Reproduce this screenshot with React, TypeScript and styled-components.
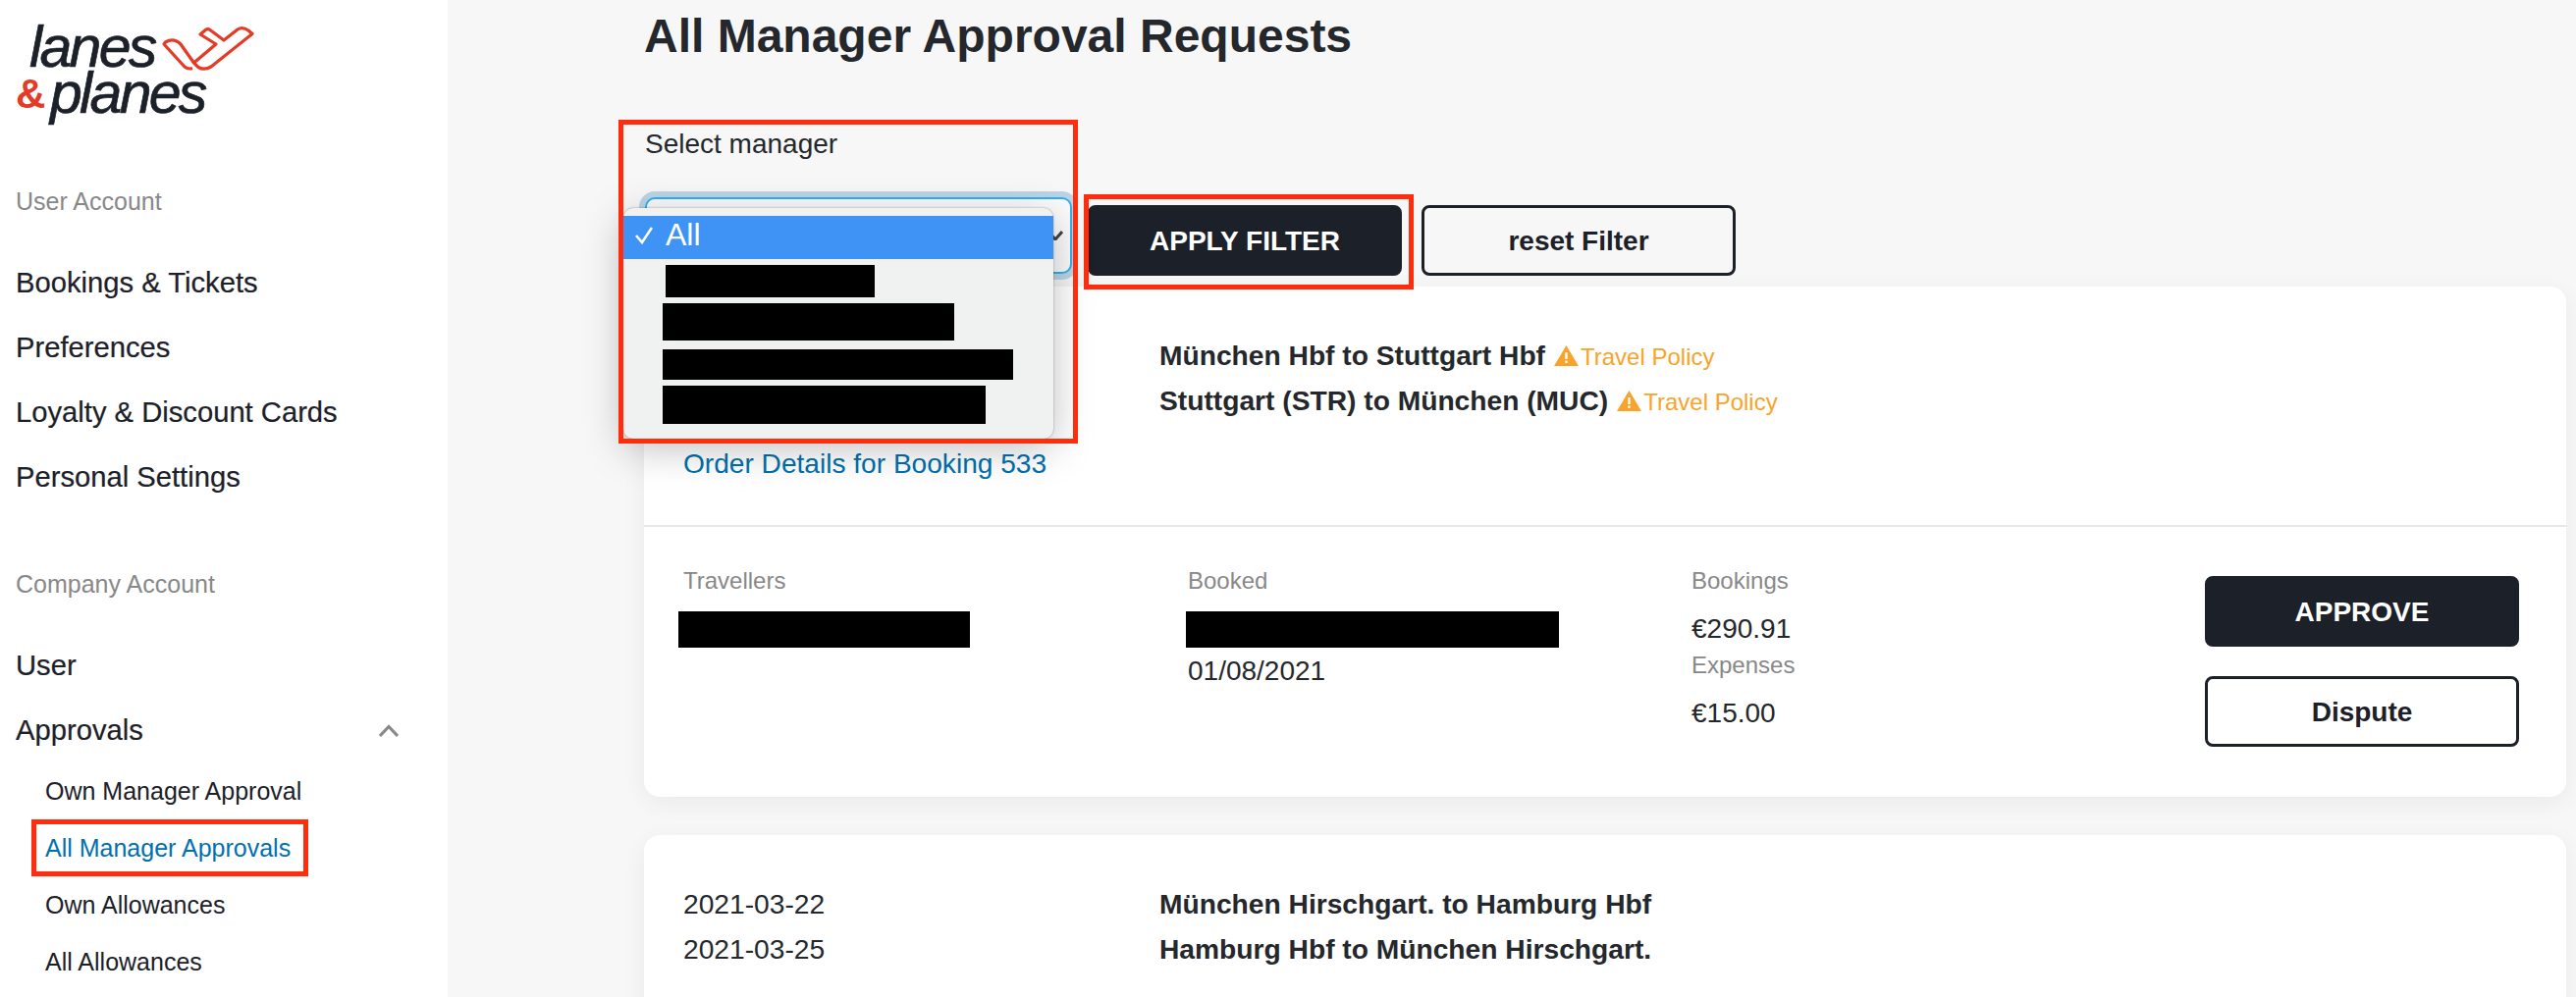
import React from "react";
import styled, { createGlobalStyle } from "styled-components";

const ink = "#1c2028";
const grey = "#888888";
const linkBlue = "#0070ae";
const markRed = "#ff2d0e";
const logoRed = "#e33b26";
const orange = "#f9a32a";

const GlobalStyle = createGlobalStyle`
  html, body {
    margin: 0;
    padding: 0;
    background: #f7f7f7;
    font-family: "Liberation Sans", Arial, sans-serif;
    color: ${ink};
  }
`;

const Page = styled.div`
  display: flex;
  width: 2624px;
  height: 1016px;
  overflow: hidden;
`;

const Sidebar = styled.aside`
  flex: 0 0 456px;
  box-sizing: border-box;
  padding-left: 16px;
  background: #fff;
`;

const Logo = styled.div`
  height: 96px;
  padding-top: 25px;
  font-size: 59px;
  line-height: 46px;
  font-style: italic;
  letter-spacing: -2.7px;
  color: ${ink};
  -webkit-text-stroke: 0.7px ${ink};
`;

const LogoLine = styled.div<{ $indent: number; $lift?: number }>`
  display: flex;
  align-items: flex-start;
  padding-left: ${(p) => p.$indent}px;
  margin-top: ${(p) => -(p.$lift || 0)}px;
`;

const PlaneMark = styled.svg`
  width: 105px;
  height: 55px;
  margin: -4px 0 0 2px;
  flex: none;
`;

const Ampersand = styled.span`
  width: 34px;
  font-size: 42px;
  font-style: normal;
  font-weight: 700;
  letter-spacing: 0;
  color: ${logoRed};
  -webkit-text-stroke: 0;
  transform: translate(-1px, 1px);
`;

const SectionLabel = styled.div<{ $gap: number }>`
  margin-top: ${(p) => p.$gap}px;
  margin-bottom: 33px;
  font-size: 25px;
  line-height: 34px;
  color: ${grey};
`;

const NavItem = styled.div`
  display: flex;
  align-items: center;
  justify-content: space-between;
  height: 66px;
  padding-right: 50px;
  font-size: 29.2px;
  -webkit-text-stroke: 0.2px ${ink};
`;

const SubItem = styled.div<{ $active?: boolean }>`
  position: relative;
  height: 58px;
  padding-left: 30px;
  font-size: 25px;
  line-height: 58px;
  color: ${(p) => (p.$active ? linkBlue : ink)};
`;

const Highlight = styled.div`
  position: absolute;
  box-sizing: border-box;
  border: 5px solid ${markRed};
  pointer-events: none;
  z-index: 6;
`;

const NavHighlight = styled(Highlight)`
  left: 16px;
  top: 0;
  width: 282px;
  height: 58px;
`;

const Main = styled.main`
  flex: 1;
  min-width: 0;
  padding: 0 10px 0 200px;
`;

const Title = styled.h1`
  margin: 0;
  font-size: 48px;
  line-height: 74px;
  font-weight: 700;
  color: #24272b;
`;

const FilterRow = styled.div`
  display: flex;
  align-items: flex-end;
  gap: 16px;
  margin-top: 55px;
  padding-bottom: 11px;
`;

const SelectGroup = styled.div`
  position: relative;
  padding-left: 1px;
`;

const SelectLabel = styled.div`
  margin-bottom: 36px;
  font-size: 28px;
  line-height: 36px;
  color: #24272b;
`;

const SelectBox = styled.div`
  position: relative;
  display: flex;
  align-items: center;
  justify-content: flex-end;
  box-sizing: border-box;
  width: 435px;
  height: 78px;
  margin-bottom: 2px;
  padding-right: 7px;
  background: #fbfbfb;
  border: 2px solid #2eb0f5;
  border-radius: 10px;
  box-shadow: 0 0 0 6px #bdd4e4;
`;

const Dropdown = styled.div`
  position: absolute;
  left: -21px;
  top: 83px;
  width: 438px;
  height: 235px;
  padding-top: 8px;
  box-sizing: border-box;
  background: #f0f1f1;
  border-radius: 10px;
  box-shadow: 0 0 2px rgba(0, 0, 0, 0.4), 0 10px 40px rgba(0, 0, 0, 0.25);
  z-index: 5;
`;

const OptionSelected = styled.div`
  display: flex;
  align-items: center;
  gap: 13px;
  box-sizing: border-box;
  height: 44px;
  padding: 0 0 5px 12px;
  background: #3f93f5;
  color: #fff;
  font-size: 32px;
`;

const Redacted = styled.div<{ $w: number; $h: number; $left: number; $top: number }>`
  width: ${(p) => p.$w}px;
  height: ${(p) => p.$h}px;
  margin-left: ${(p) => p.$left}px;
  margin-top: ${(p) => p.$top}px;
  background: #000;
`;

const SelectHighlight = styled(Highlight)`
  left: -26px;
  top: -7px;
  width: 468px;
  height: 330px;
`;

const Button = styled.button<{ $dark?: boolean; $width: number }>`
  box-sizing: border-box;
  display: block;
  width: ${(p) => p.$width}px;
  height: 72px;
  padding: 2px 0 0;
  border: 3px solid ${ink};
  border-radius: 8px;
  background: ${(p) => (p.$dark ? ink : "transparent")};
  color: ${(p) => (p.$dark ? "#fff" : ink)};
  font: 700 28px "Liberation Sans", Arial, sans-serif;
`;

const ApplyWrap = styled.div`
  position: relative;
  margin-right: 4px;
`;

const ApplyHighlight = styled(Highlight)`
  left: -4px;
  top: -11px;
  width: 336px;
  height: 97px;
`;

const Card = styled.section<{ $tall?: boolean }>`
  box-sizing: border-box;
  min-height: ${(p) => (p.$tall ? "300px" : "0")};
  margin-bottom: 39px;
  background: #fff;
  border-radius: 16px;
  box-shadow: 0 6px 24px rgba(0, 0, 0, 0.06);
`;

const CardTop = styled.div<{ $divided?: boolean }>`
  padding: 47px 40px 39px;
  border-bottom: ${(p) => (p.$divided ? "2px solid #e8e8e8" : "none")};
`;

const TripGrid = styled.div`
  display: grid;
  grid-template-columns: 485px 1fr;
  grid-auto-rows: 46px;
  align-items: center;
  font-size: 28.2px;
`;

const TripDate = styled.div`
  grid-column: 1;
  color: #24272b;
`;

const TripRoute = styled.div`
  grid-column: 2;
  display: flex;
  align-items: center;
`;

const RouteName = styled.span`
  font-weight: 700;
  color: #24272b;
`;

const PolicyNote = styled.span`
  display: inline-flex;
  align-items: center;
  margin-left: 9px;
  font-size: 24px;
  color: ${orange};
`;

const PolicyText = styled.span`
  margin: 3px 0 0 2px;
`;

const OrderLink = styled.a`
  display: block;
  margin-top: 19px;
  font-size: 28.1px;
  line-height: 46px;
  color: ${linkBlue};
`;

const CardBottom = styled.div`
  display: grid;
  grid-template-columns: 514px 513px 523px 320px;
  padding: 38px 48px 51px 40px;
`;

const Label = styled.div`
  font-size: 24px;
  line-height: 34px;
  color: ${grey};
`;

const Value = styled.div`
  margin-top: 14px;
  font-size: 28px;
  line-height: 36px;
  color: #24272b;
`;

const DateBelow = styled(Value)`
  margin-top: 6px;
`;

const Expenses = styled(Label)`
  margin-top: 2px;
`;

const Actions = styled.div`
  display: flex;
  flex-direction: column;
  gap: 30px;
  padding-top: 12px;
`;

const WarningIcon = () => (
  <svg width="25" height="21" viewBox="0 0 25 21">
    <path d="M12.5 0 L25 21 H0 Z" fill={orange} />
    <rect x="11.3" y="7" width="2.4" height="7" fill="#fff" />
    <rect x="11.3" y="15.5" width="2.4" height="2.4" fill="#fff" />
  </svg>
);

const App = () => (
  <Page>
    <GlobalStyle />
    <Sidebar>
      <Logo>
        <LogoLine $indent={14}>
          lanes
          <PlaneMark viewBox="0 0 105 55" fill="none" stroke={logoRed} strokeWidth="3.2" strokeLinejoin="round">
            <path d="M44 14 L50 9 Q52 8 54 9.5 L68 20 L82 9 Q87 6 93 10 L97 13.5 L55 47 Q48 51 42 47.5 L37.5 43 L60 24 Z" />
            <path d="M37.5 43 L24 24 Q17 17 8.5 22 L7 24 L28 47 Q32 50 36 48.5" />
          </PlaneMark>
        </LogoLine>
        <LogoLine $indent={1} $lift={4}>
          <Ampersand>&amp;</Ampersand>
          planes
        </LogoLine>
      </Logo>

      <SectionLabel $gap={67}>User Account</SectionLabel>
      <NavItem>Bookings &amp; Tickets</NavItem>
      <NavItem>Preferences</NavItem>
      <NavItem>Loyalty &amp; Discount Cards</NavItem>
      <NavItem>Personal Settings</NavItem>

      <SectionLabel $gap={59}>Company Account</SectionLabel>
      <NavItem>User</NavItem>
      <NavItem>
        Approvals
        <svg width="20" height="13" viewBox="0 0 20 13" fill="none" stroke={grey} strokeWidth="3">
          <path d="M1 12 L10 2.5 L19 12" />
        </svg>
      </NavItem>
      <SubItem>Own Manager Approval</SubItem>
      <SubItem $active>
        All Manager Approvals
        <NavHighlight />
      </SubItem>
      <SubItem>Own Allowances</SubItem>
      <SubItem>All Allowances</SubItem>
    </Sidebar>

    <Main>
      <Title>All Manager Approval Requests</Title>

      <FilterRow>
        <SelectGroup>
          <SelectLabel>Select manager</SelectLabel>
          <SelectBox>
            <svg width="16" height="10" viewBox="0 0 16 10" fill="none" stroke="#444" strokeWidth="3">
              <path d="M1 1 L8 9 L15 1" />
            </svg>
          </SelectBox>
          <Dropdown>
            <OptionSelected>
              <svg width="18" height="18" viewBox="0 0 18 18" fill="none" stroke="#fff" strokeWidth="2.6">
                <path d="M1 9 L7 16 L17 1" />
              </svg>
              All
            </OptionSelected>
            <Redacted $w={213} $h={33} $left={43} $top={6} />
            <Redacted $w={297} $h={38} $left={40} $top={6} />
            <Redacted $w={357} $h={31} $left={40} $top={9} />
            <Redacted $w={329} $h={39} $left={40} $top={6} />
          </Dropdown>
          <SelectHighlight />
        </SelectGroup>
        <ApplyWrap>
          <Button $dark $width={320}>APPLY FILTER</Button>
          <ApplyHighlight />
        </ApplyWrap>
        <Button $width={320}>reset Filter</Button>
      </FilterRow>

      <Card>
        <CardTop $divided>
          <TripGrid>
            <TripRoute>
              <RouteName>München Hbf to Stuttgart Hbf</RouteName>
              <PolicyNote>
                <WarningIcon />
                <PolicyText>Travel Policy</PolicyText>
              </PolicyNote>
            </TripRoute>
            <TripRoute>
              <RouteName>Stuttgart (STR) to München (MUC)</RouteName>
              <PolicyNote>
                <WarningIcon />
                <PolicyText>Travel Policy</PolicyText>
              </PolicyNote>
            </TripRoute>
          </TripGrid>
          <OrderLink>Order Details for Booking 533</OrderLink>
        </CardTop>
        <CardBottom>
          <div>
            <Label>Travellers</Label>
            <Redacted $w={297} $h={37} $left={-5} $top={14} />
          </div>
          <div>
            <Label>Booked</Label>
            <Redacted $w={380} $h={37} $left={-2} $top={14} />
            <DateBelow>01/08/2021</DateBelow>
          </div>
          <div>
            <Label>Bookings</Label>
            <Value>€290.91</Value>
            <Expenses>Expenses</Expenses>
            <Value>€15.00</Value>
          </div>
          <Actions>
            <Button $dark $width={320}>APPROVE</Button>
            <Button $width={320}>Dispute</Button>
          </Actions>
        </CardBottom>
      </Card>

      <Card $tall>
        <CardTop>
          <TripGrid>
            <TripDate>2021-03-22</TripDate>
            <TripRoute>
              <RouteName>München Hirschgart. to Hamburg Hbf</RouteName>
            </TripRoute>
            <TripDate>2021-03-25</TripDate>
            <TripRoute>
              <RouteName>Hamburg Hbf to München Hirschgart.</RouteName>
            </TripRoute>
          </TripGrid>
        </CardTop>
      </Card>
    </Main>
  </Page>
);

export default App;
